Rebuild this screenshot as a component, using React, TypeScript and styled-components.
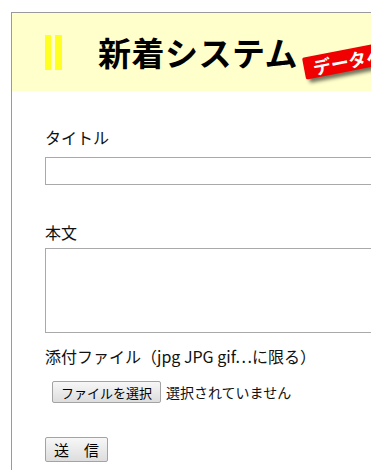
import React from "react";
import styled, { createGlobalStyle } from "styled-components";

const Global = createGlobalStyle`
  html, body {
    margin: 0;
    padding: 0;
    overflow: hidden;
    background: #ffffff;
  }
  body {
    font-family: "Noto Sans CJK JP", "Noto Sans", sans-serif;
    color: #000;
  }
`;

const Page = styled.div`
  padding: 12px 0 0 11px;
  width: 800px;
`;

const Frame = styled.div`
  border: 1px solid #9a9a9a;
  width: 700px;
  height: 600px;
`;

const Header = styled.header`
  position: relative;
  height: 78px;
  background: #ffffcc;
  display: flex;
  align-items: center;
  padding-left: 33px;
`;

const Bars = styled.span`
  display: block;
  width: 17px;
  height: 35px;
  box-sizing: border-box;
  border-left: 6px solid #ffff22;
  border-right: 7px solid #ffff22;
`;

const Title = styled.h1`
  margin: 0 0 0 36px;
  font-size: 33px;
  line-height: 33px;
  font-weight: 700;
  letter-spacing: 0.5px;
`;

const Badge = styled.div`
  position: absolute;
  left: 290px;
  top: 45px;
  height: 22px;
  padding: 0 8px 0 9px;
  background: #f00000;
  color: #fff;
  font-size: 18px;
  line-height: 22px;
  font-weight: 700;
  white-space: nowrap;
  transform-origin: left top;
  transform: rotate(-11deg);
  box-shadow: 3px 4px 4px rgba(0, 0, 0, 0.55);
  border-radius: 2px;
`;

const Form = styled.form`
  padding: 38px 0 0 33px;
  display: flex;
  flex-direction: column;
  align-items: flex-start;
`;

const Label = styled.label<{ $top: number; $bottom: number }>`
  display: block;
  font-size: 16px;
  line-height: 16px;
  margin-top: ${(p) => p.$top}px;
  margin-bottom: ${(p) => p.$bottom}px;
  white-space: nowrap;
  color: #111;
`;

const TextInput = styled.input`
  box-sizing: border-box;
  width: 560px;
  height: 28px;
  margin: 0;
  border: 1px solid #a9a9a9;
  background: #fff;
  outline: none;
`;

const TextArea = styled.textarea`
  box-sizing: border-box;
  width: 560px;
  height: 85px;
  margin: 0;
  border: 1px solid #a9a9a9;
  resize: none;
  background: #fff;
  outline: none;
`;

const FileRow = styled.div`
  display: flex;
  align-items: center;
  margin: 17px 0 0 7px;
`;

const Button = styled.button<{ $h: number; $fs: number }>`
  box-sizing: border-box;
  height: ${(p) => p.$h}px;
  padding: 0 8px;
  margin: 0;
  font-family: "Noto Sans CJK JP", sans-serif;
  font-size: ${(p) => p.$fs}px;
  line-height: 1;
  color: #000;
  border: 1px solid #a3a3a3;
  border-radius: 2px;
  background: linear-gradient(#f7f7f7, #dddddd);
  white-space: nowrap;
`;

const FileStatus = styled.span`
  margin-left: 5px;
  font-size: 14px;
  white-space: nowrap;
  color: #111;
`;

const SendRow = styled.div`
  margin-top: 34px;
`;

export default function App() {
  return (
    <>
      <Global />
      <Page>
        <Frame>
          <Header>
            <Bars />
            <Title>新着システム</Title>
            <Badge>データベース</Badge>
          </Header>
          <Form onSubmit={(e) => e.preventDefault()}>
            <Label $top={0} $bottom={12}>タイトル</Label>
            <TextInput type="text" />
            <Label $top={39} $bottom={8}>本文</Label>
            <TextArea />
            <Label $top={15} $bottom={0}>添付ファイル（jpg JPG gif…に限る）</Label>
            <FileRow>
              <Button type="button" $h={22} $fs={13}>ファイルを選択</Button>
              <FileStatus>選択されていません</FileStatus>
            </FileRow>
            <SendRow>
              <Button type="submit" $h={25} $fs={15}>送　信</Button>
            </SendRow>
          </Form>
        </Frame>
      </Page>
    </>
  );
}
